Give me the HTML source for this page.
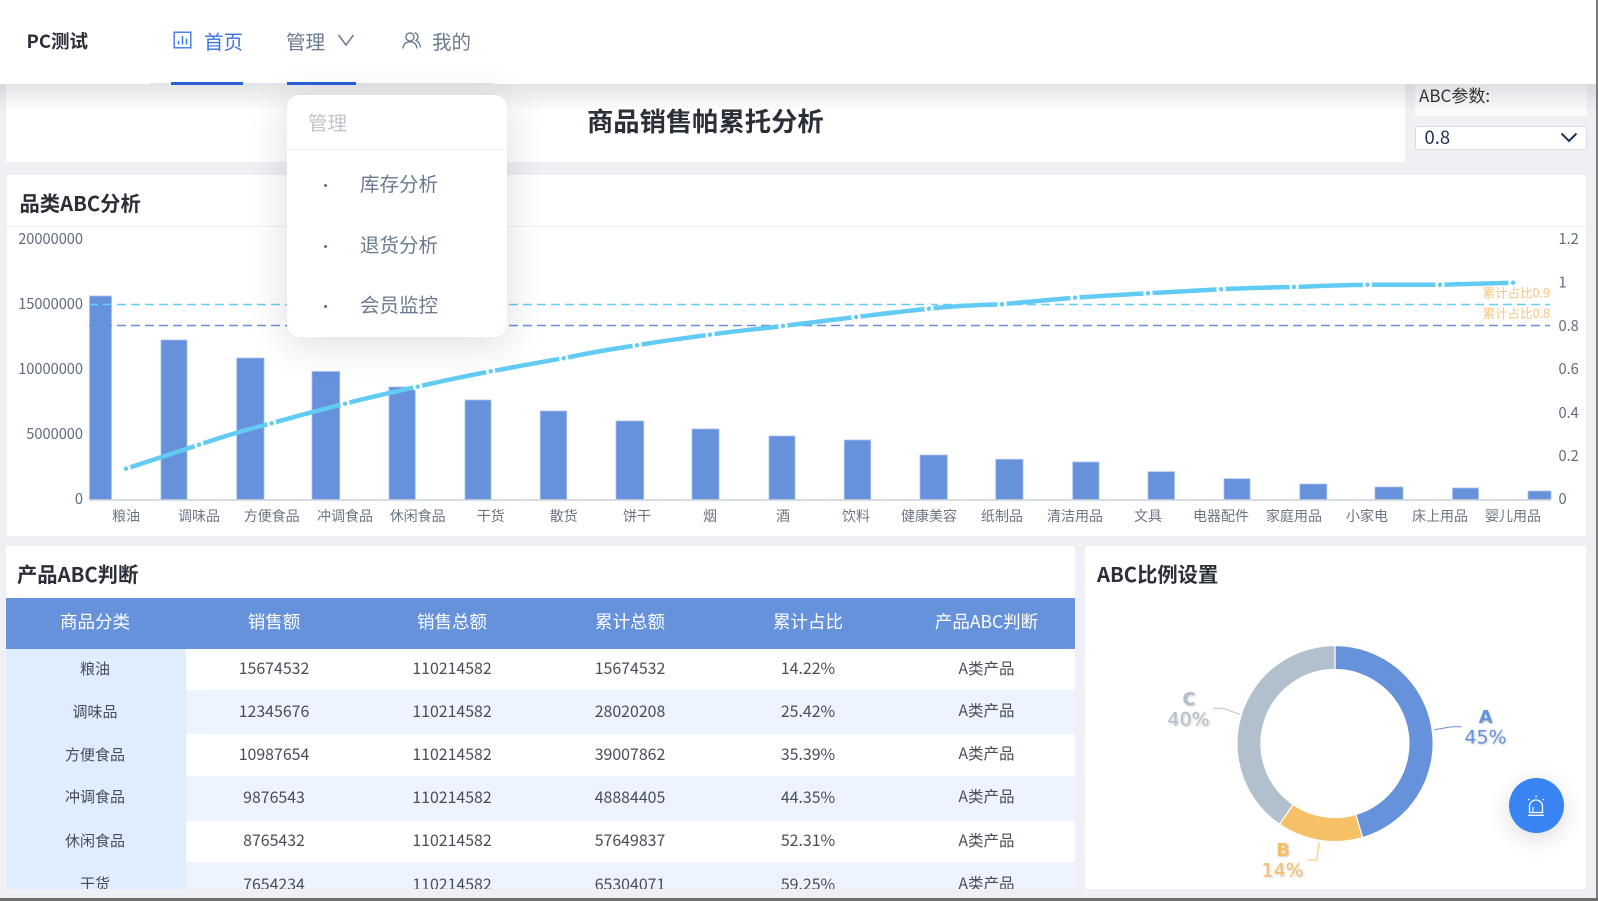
<!DOCTYPE html>
<html lang="zh-CN">
<head>
<meta charset="utf-8">
<title>商品销售帕累托分析</title>
<style>
html,body{margin:0;padding:0;width:1598px;height:901px;overflow:hidden;background:#eef0f4;}
body{position:relative;font-family:"Noto Sans CJK SC","Liberation Sans",sans-serif;color:#333;}
.a{position:absolute;}
.p{position:absolute;background:#fff;}
.t{position:absolute;white-space:nowrap;line-height:1;}
.h{font-weight:700;font-size:20.300px;color:#2b2f38;}
#tbl{position:absolute;left:6px;top:598px;width:1069px;height:291px;overflow:hidden;}
table{border-collapse:collapse;table-layout:fixed;width:1069px;}
th{background:#6592da;color:#fff;font-weight:400;font-size:17.500px;height:51px;padding:0 2px 4px 0;box-sizing:border-box;}
td{padding:0 2px 3px 0;box-sizing:border-box;text-align:center;font-size:15.900px;color:#484e58;line-height:1;}
td:first-child{background:#e0ecff;font-size:15px;padding-bottom:2px;}
td:last-child{font-size:15.500px;padding-right:0;padding-bottom:2px;}
th:last-child{padding-right:0;}
tr.e td{background:#edf4ff;}
tr.e td:first-child{background:#e0ecff;}
tr.m td{padding-bottom:4px;}
tr.m td:last-child{padding-right:0;}
tr.l td{padding:1px 2px 0 0;}
tr.l td:last-child{padding-right:0;}
.d{position:absolute;font-family:"DejaVu Sans",sans-serif;line-height:1;white-space:nowrap;transform:translate(-50%,-50%);text-shadow:1px 1px 2px rgba(0,0,0,.22);}
.d.b{font-weight:700;}
</style>
</head>
<body>

<!-- panels -->
<div class="p" style="left:6px;top:84px;width:1399px;height:78px;"></div>
<div class="p" style="left:1415px;top:84px;width:172px;height:32px;background:#fafafb;"></div>
<div class="p" style="left:7px;top:175px;width:1579px;height:361px;"></div>
<div class="a" style="left:7px;top:226px;width:1579px;height:1px;background:#f0f1f4;"></div>
<div class="p" style="left:6px;top:546px;width:1069px;height:343px;"></div>
<div class="p" style="left:1085px;top:546px;width:501px;height:343px;"></div>

<div class="t" style="left:587px;top:107px;font-size:26.300px;font-weight:700;color:#2b2f38;">商品销售帕累托分析</div>
<div class="t" style="left:1419px;top:86px;font-size:17px;color:#333;">ABC参数:</div>
<div class="a" style="left:1415px;top:126px;width:172px;height:24px;box-sizing:border-box;background:#fff;border:1.5px solid #d9dce6;border-radius:3px;"></div>
<div class="t" style="left:1424.500px;top:128px;font-size:18.500px;color:#1d3054;">0.8</div>
<svg class="a" style="left:1558px;top:130px;" width="22" height="14" viewBox="0 0 22 14"><path d="M3.500 3.500 L11 11 L18.500 3.500" fill="none" stroke="#1d3054" stroke-width="2"/></svg>

<div class="t h" style="left:19.500px;top:191.500px;">品类ABC分析</div>
<div class="t h" style="left:17px;top:562.500px;">产品ABC判断</div>
<div class="t h" style="left:1097px;top:562.500px;">ABC比例设置</div>

<!-- pareto chart -->
<svg class="a" style="left:0;top:0;" width="1598" height="901" viewBox="0 0 1598 901">
  <g fill="#6592da" stroke="#a9c1ec" stroke-width="0.8">
    <rect x="89.500" y="296" width="22" height="203.500"/>
    <rect x="161" y="340" width="26" height="159.500"/>
    <rect x="236.700" y="358" width="27.300" height="141.500"/>
    <rect x="312" y="371.500" width="27.700" height="128"/>
    <rect x="389" y="387" width="26.300" height="112.500"/>
    <rect x="465" y="400" width="26" height="99.500"/>
    <rect x="540.300" y="411" width="26.400" height="88.500"/>
    <rect x="616" y="421" width="27.700" height="78.500"/>
    <rect x="692" y="429" width="27" height="70.500"/>
    <rect x="769" y="436" width="26" height="63.500"/>
    <rect x="844.300" y="440" width="26.400" height="59.500"/>
    <rect x="920" y="455" width="27.300" height="44.500"/>
    <rect x="995.700" y="459.300" width="27.300" height="40.200"/>
    <rect x="1072.700" y="462" width="26.300" height="37.500"/>
    <rect x="1148" y="471.700" width="26.500" height="27.800"/>
    <rect x="1224" y="478.700" width="26" height="20.800"/>
    <rect x="1299.800" y="484" width="27" height="15.500"/>
    <rect x="1375" y="487" width="28" height="12.500"/>
    <rect x="1452.500" y="488" width="26" height="11.500"/>
    <rect x="1528" y="491" width="23" height="8.500"/>
  </g>
  <line x1="89" y1="500" x2="1551" y2="500" stroke="#c9cfdc" stroke-width="1.500"/>
  <line x1="89" y1="304.500" x2="1550" y2="304.500" stroke="#5fd0f8" stroke-width="1.500" stroke-dasharray="9 5"/>
  <line x1="89" y1="325.500" x2="1550" y2="325.500" stroke="#6592da" stroke-width="1.500" stroke-dasharray="9 5"/>

  <path d="M126 468.700 L199 444.700 C225 436 248 429 271.700 423.300 C296 416 320 410 345 403.700 C370 397 394 392 417.700 386.700 C442 381 466 376 490.700 371.300 C515 367 540 362 563.700 358.300 C588 353 612 349 637 345.300 C662 341 686 338 710 334.700 C735 331 759 329 783 326 C808 323 832 320 856 317 C881 314 905 311 929 308.700 C953 306 978 305 1002 304.300 C1027 302 1051 299.500 1075 297.700 C1100 296 1124 294.500 1148 293.300 C1172 292 1197 290.500 1221 289.300 C1245 288 1270 287.500 1294 287 C1318 286 1343 285 1367.400 284.700 L1440 284.700 C1465 284 1489 283.500 1513 282.700" fill="none" stroke="#62cbf4" stroke-width="4.500"/>
  <g fill="#62cbf4" stroke="#fff" stroke-width="2.500">
    <circle cx="126" cy="468.700" r="3.500"/><circle cx="199" cy="444.700" r="3.500"/><circle cx="271.700" cy="423.300" r="3.500"/><circle cx="345" cy="403.700" r="3.500"/><circle cx="417.700" cy="386.700" r="3.500"/><circle cx="490.700" cy="371.300" r="3.500"/><circle cx="563.700" cy="358.300" r="3.500"/><circle cx="637" cy="345.300" r="3.500"/><circle cx="710" cy="334.700" r="3.500"/><circle cx="783" cy="326" r="3.500"/><circle cx="856" cy="317" r="3.500"/><circle cx="929" cy="308.700" r="3.500"/><circle cx="1002" cy="304.300" r="3.500"/><circle cx="1075" cy="297.700" r="3.500"/><circle cx="1148" cy="293.300" r="3.500"/><circle cx="1221" cy="289.300" r="3.500"/><circle cx="1294" cy="287" r="3.500"/><circle cx="1367.400" cy="284.700" r="3.500"/><circle cx="1440" cy="284.700" r="3.500"/><circle cx="1513" cy="282.700" r="3.500"/>
  </g>

  <g font-family="'Noto Sans CJK SC','Liberation Sans',sans-serif" font-size="14.600" fill="#5f6a7a" text-anchor="end">
    <text x="83" y="244">20000000</text>
    <text x="83" y="309">15000000</text>
    <text x="83" y="374">10000000</text>
    <text x="83" y="439">5000000</text>
    <text x="83" y="504">0</text>
  </g>
  <g font-family="'Noto Sans CJK SC','Liberation Sans',sans-serif" font-size="14.600" fill="#5f6a7a">
    <text x="1558.500" y="244">1.2</text>
    <text x="1558.500" y="287.500">1</text>
    <text x="1558.500" y="331">0.8</text>
    <text x="1558.500" y="374">0.6</text>
    <text x="1558.500" y="418">0.4</text>
    <text x="1558.500" y="461">0.2</text>
    <text x="1558.500" y="504">0</text>
  </g>
  <g font-family="'Noto Sans CJK SC','Liberation Sans',sans-serif" font-size="14px" fill="#6b7482" text-anchor="middle">
    <text x="126" y="521">粮油</text><text x="199" y="521">调味品</text><text x="271.700" y="521">方便食品</text><text x="345" y="521">冲调食品</text><text x="417.700" y="521">休闲食品</text><text x="490.700" y="521">干货</text><text x="563.700" y="521">散货</text><text x="637" y="521">饼干</text><text x="710" y="521">烟</text><text x="783" y="521">酒</text><text x="856" y="521">饮料</text><text x="929" y="521">健康美容</text><text x="1002" y="521">纸制品</text><text x="1075" y="521">清洁用品</text><text x="1148" y="521">文具</text><text x="1221" y="521">电器配件</text><text x="1294" y="521">家庭用品</text><text x="1367" y="521">小家电</text><text x="1440" y="521">床上用品</text><text x="1513" y="521">婴儿用品</text>
  </g>
  <g font-family="'Noto Sans CJK SC','Liberation Sans',sans-serif" font-size="12.500" fill="#f6c57b" text-anchor="end">
    <text x="1550" y="297.500">累计占比0.9</text>
    <text x="1550" y="318">累计占比0.8</text>
  </g>

  <!-- donut -->
  <g stroke="#fff" stroke-width="1.200">
    <path d="M1335 645.500 A98 98 0 0 1 1362.500 837.600 L1355.800 814.500 A74 74 0 0 0 1335 669.500 Z" fill="#6592da"/>
    <path d="M1362.500 837.600 A98 98 0 0 1 1279.500 824.300 L1293.100 804.500 A74 74 0 0 0 1355.800 814.500 Z" fill="#f6c066"/>
    <path d="M1279.500 824.300 A98 98 0 0 1 1335 645.500 L1335 669.500 A74 74 0 0 0 1293.100 804.500 Z" fill="#b2bfcc"/>
  </g>
  <path d="M1434.300 729.700 L1451.700 726.700 L1461.700 726.700" fill="none" stroke="#6592da" stroke-width="1"/>
  <path d="M1240 714.300 L1222.700 708.300 L1213.300 708.300" fill="none" stroke="#b2bfcc" stroke-width="1"/>
  <path d="M1319.300 842.300 L1316.700 860 L1307.300 860" fill="none" stroke="#f6c066" stroke-width="1"/>
</svg>

<div class="d b" style="left:1485.700px;top:718.300px;font-size:18px;color:#6592da;">A</div>
<div class="d" style="left:1485.500px;top:738.300px;font-size:19px;color:#6592da;">45%</div>
<div class="d b" style="left:1189px;top:699.500px;font-size:18px;color:#b2bfcc;">C</div>
<div class="d" style="left:1188.500px;top:720.300px;font-size:19px;color:#b2bfcc;">40%</div>
<div class="d b" style="left:1283px;top:851px;font-size:18px;color:#f6c066;">B</div>
<div class="d" style="left:1282.500px;top:871.200px;font-size:19px;color:#f6c066;">14%</div>

<!-- table -->
<div id="tbl">
<table>
<colgroup><col style="width:180px"><col style="width:178px"><col style="width:178px"><col style="width:178px"><col style="width:178px"><col style="width:177px"></colgroup>
<tr><th>商品分类</th><th>销售额</th><th>销售总额</th><th>累计总额</th><th>累计占比</th><th>产品ABC判断</th></tr>
<tr style="height:41px"><td>粮油</td><td>15674532</td><td>110214582</td><td>15674532</td><td>14.22%</td><td>A类产品</td></tr>
<tr class="e" style="height:44px"><td>调味品</td><td>12345676</td><td>110214582</td><td>28020208</td><td>25.42%</td><td>A类产品</td></tr>
<tr style="height:42px"><td>方便食品</td><td>10987654</td><td>110214582</td><td>39007862</td><td>35.39%</td><td>A类产品</td></tr>
<tr class="e m" style="height:45px"><td>冲调食品</td><td>9876543</td><td>110214582</td><td>48884405</td><td>44.35%</td><td>A类产品</td></tr>
<tr style="height:41px"><td>休闲食品</td><td>8765432</td><td>110214582</td><td>57649837</td><td>52.31%</td><td>A类产品</td></tr>
<tr class="e l" style="height:42px"><td>干货</td><td>7654234</td><td>110214582</td><td>65304071</td><td>59.25%</td><td>A类产品</td></tr>
</table>
</div>

<!-- floating button -->
<div class="a" style="left:1508.500px;top:778px;width:55px;height:55px;border-radius:50%;background:#3884f3;box-shadow:0 6px 24px rgba(0,0,0,.14);"></div>
<svg class="a" style="left:1516px;top:785px;" width="40" height="40" viewBox="1516 785 40 40">
  <path d="M1529.500 812.500 V806.500 A6.500 6.500 0 0 1 1542.500 806.500 V812.500 Z" fill="none" stroke="#fff" stroke-width="1.300"/>
  <path d="M1528 815.300 H1544" stroke="#fff" stroke-width="1.300"/>
  <path d="M1533 812 V807" stroke="#fff" stroke-width="1.100"/>
  <path d="M1536 795.500 V797.500 M1528 799 L1529.500 800 M1544 799 L1542.500 800" stroke="#fff" stroke-width="1.300"/>
</svg>

<!-- shadow below nav -->
<div class="a" style="left:0;top:84px;width:1596px;height:28px;background:linear-gradient(to bottom,rgba(40,50,70,.13),rgba(40,50,70,0));"></div>

<!-- nav -->
<div class="a" style="left:0;top:0;width:1596px;height:84px;background:#fff;"></div>
<div class="a" style="left:149px;top:83px;width:345px;height:1px;background:#e4e7ed;"></div>
<div class="t" style="left:26.500px;top:32px;font-size:18.500px;font-weight:700;color:#2b2f38;">PC测试</div>

<svg class="a" style="left:172px;top:30px;" width="21" height="20" viewBox="0 0 21 20">
  <rect x="2.200" y="2.200" width="16.600" height="15.600" fill="none" stroke="#3f78e0" stroke-width="1.400"/>
  <path d="M6.500 14.500 V11 M10.500 14.500 V6 M14.500 14.500 V8.500" stroke="#3f78e0" stroke-width="1.500" fill="none"/>
</svg>
<div class="t" style="left:204px;top:31px;font-size:19.500px;color:#3a72de;">首页</div>
<div class="a" style="left:171px;top:82px;width:72px;height:2.500px;background:#2a5fd8;"></div>

<div class="t" style="left:286px;top:30.500px;font-size:19.500px;color:#6b7a90;">管理</div>
<svg class="a" style="left:336px;top:31px;" width="20" height="17" viewBox="0 0 20 17"><path d="M2.500 4 L10 14 L17.500 4" fill="none" stroke="#6b7a90" stroke-width="1.500"/></svg>
<div class="a" style="left:287px;top:82px;width:69px;height:2.500px;background:#2a5fd8;"></div>

<svg class="a" style="left:401px;top:31px;" width="21" height="19" viewBox="0 0 21 19">
  <circle cx="9" cy="6" r="4" fill="none" stroke="#6b7a90" stroke-width="1.400"/>
  <path d="M2 17.500 C2.500 13 5 10.800 9 10.800 C13 10.800 15.500 13 16 17.500" fill="none" stroke="#6b7a90" stroke-width="1.400"/>
  <path d="M13.500 1.800 A4.200 4.200 0 0 1 15 9.500 C17.500 10.500 19 13 19.500 16.500" fill="none" stroke="#6b7a90" stroke-width="1.400"/>
</svg>
<div class="t" style="left:432px;top:31px;font-size:19.500px;color:#6b7a90;">我的</div>

<!-- dropdown -->
<div class="a" style="left:287px;top:95px;width:220px;height:242px;background:#fff;border-radius:13px;box-shadow:0 6px 40px rgba(30,40,60,.16);"></div>
<div class="a" style="left:287px;top:149px;width:220px;height:1px;background:#eff0f3;"></div>
<div class="t" style="left:308px;top:112px;font-size:19.500px;color:#c0c4cc;">管理</div>
<div class="a" style="left:324px;top:184px;width:3px;height:3px;border-radius:50%;background:#5f6b80;"></div>
<div class="t" style="left:360px;top:173px;font-size:19.500px;color:#6b7a90;">库存分析</div>
<div class="a" style="left:324px;top:245px;width:3px;height:3px;border-radius:50%;background:#5f6b80;"></div>
<div class="t" style="left:360px;top:234px;font-size:19.500px;color:#6b7a90;">退货分析</div>
<div class="a" style="left:324px;top:305px;width:3px;height:3px;border-radius:50%;background:#5f6b80;"></div>
<div class="t" style="left:360px;top:294px;font-size:19.500px;color:#6b7a90;">会员监控</div>

<!-- window edges -->
<div class="a" style="left:1596px;top:0;width:2px;height:901px;background:#7a7a7c;"></div>
<div class="a" style="left:0;top:898px;width:1598px;height:3px;background:#6e6e70;"></div>
</body>
</html>
